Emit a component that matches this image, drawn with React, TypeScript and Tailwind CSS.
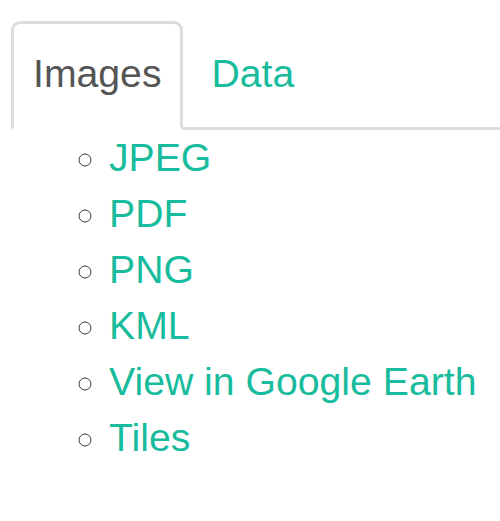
const formats = ['JPEG', 'PDF', 'PNG', 'KML', 'View in Google Earth', 'Tiles']

export default function App() {
  return (
    <div
      className="min-h-[521px] bg-white pt-[21px] pl-[11px] text-[39.2px] leading-[56px]"
      style={{ fontFamily: '"Liberation Sans", Arial, sans-serif' }}
    >
      <ul className="flex border-b-[3px] border-[#ddd]">
        <li className="-mb-[3px]">
          <a className="block rounded-t-[9px] border-[3px] border-[#ddd] border-b-transparent bg-white pt-[22px] pb-[25px] pl-[19px] pr-[18px] text-[#555]">
            Images
          </a>
        </li>
        <li className="-mb-[3px] ml-[9px]">
          <a className="block border-[3px] border-transparent pt-[22px] pb-[25px] pl-[17px] pr-[19px] text-[#18bc9c]">
            Data
          </a>
        </li>
      </ul>
      <ul className="list-[circle] pl-[98px] marker:text-[#333]">
        {formats.map(f => (
          <li key={f}>
            <a className="text-[#18bc9c]">{f}</a>
          </li>
        ))}
      </ul>
    </div>
  )
}
